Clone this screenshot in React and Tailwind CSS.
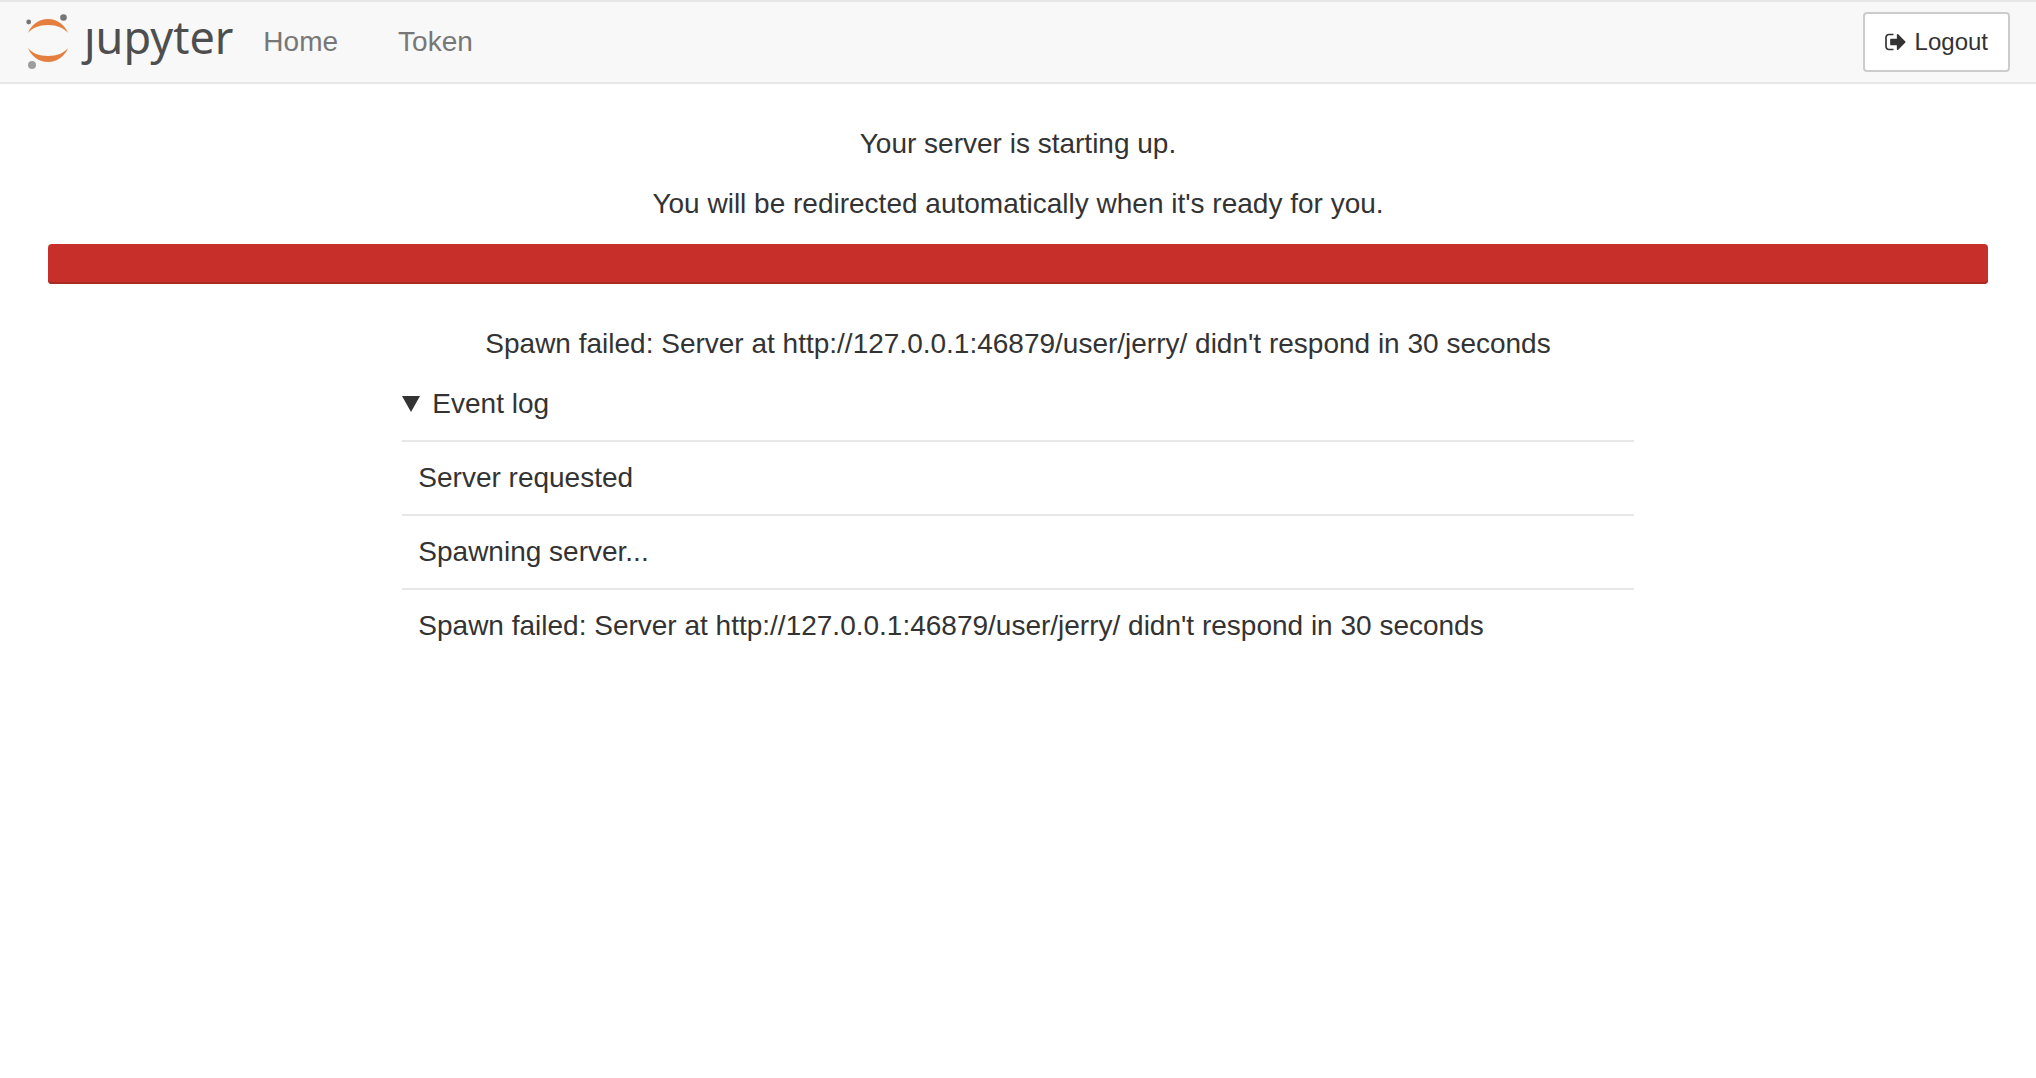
const events = [
  "Server requested",
  "Spawning server...",
  "Spawn failed: Server at http://127.0.0.1:46879/user/jerry/ didn't respond in 30 seconds",
];

function Logo() {
  return (
    <a href="#" aria-label="jupyter" className="flex h-20 items-center text-[#4e4e4e]">
      <svg viewBox="24 12 48 60" className="h-[60px] w-12" aria-hidden="true">
        <path d="M28 33C31 25 39 19 48 19S65 25 68 33C64 28 57 25 48 25S32 28 28 33Z" fill="#e57f3f" />
        <path d="M28 48C31 56 39 62 48 62S65 56 68 48C64 53 57 56 48 56S32 53 28 48Z" fill="#e57f3f" />
        <circle cx="28.700" cy="22" r="2.400" fill="#767677" />
        <circle cx="63.500" cy="17.500" r="3.300" fill="#767677" />
        <circle cx="32" cy="65" r="4" fill="#9e9e9e" />
      </svg>
      <span className="ml-3 pb-2.5 font-['Noto_Sans',sans-serif] text-[45px] leading-[68px]">ȷupyter</span>
    </a>
  );
}

export default function App() {
  return (
    <div className="min-h-screen bg-white font-['Liberation_Sans',Arial,sans-serif] text-[28px] leading-10 text-[#333]">
      <header className="flex items-center justify-between border-y-2 border-[#e7e7e7] bg-[#f8f8f8] pr-[26px] pl-6">
        <nav className="flex items-center text-[#777]">
          <Logo />
          <a href="#" className="ml-[30px]">Home</a>
          <a href="#" className="ml-[60px]">Token</a>
        </nav>
        <button type="button" className="flex h-[60px] items-center gap-2 rounded-sm border-2 border-[#ccc] bg-white px-5 text-2xl">
          <svg viewBox="0 0 1664 1536" className="h-5 w-[22px]" fill="currentColor" aria-hidden="true">
            <path d="M640 1440q0 4 1 20t.5 26.500-3 23.500-10 19.500-20.500 6.500H288q-119 0-203.500-84.500T0 1248V544q0-119 84.500-203.500T288 256h320q13 0 22.500 9.500T640 288q0 4 1 20t.5 26.500-3 23.500-10 19.500T608 384H288q-66 0-113 47t-47 113v704q0 66 47 113t113 47h312l11.500 1 11.500 3 8 5.500 7 9 2 13.500zm928-544q0 26-19 45l-544 544q-19 19-45 19t-45-19-19-45v-288H448q-26 0-45-19t-19-45V704q0-26 19-45t45-19h448V352q0-26 19-45t45-19 45 19l544 544q19 19 19 45z" transform="translate(0 -128)" />
          </svg>
          Logout
        </button>
      </header>
      <main className="px-12 pt-10">
        <div className="space-y-5 text-center">
          <p>Your server is starting up.</p>
          <p>You will be redirected automatically when it's ready for you.</p>
          <div
            role="progressbar"
            aria-label="Server startup"
            aria-valuenow={100}
            className="h-10 rounded-sm bg-[#c7302a] shadow-[inset_0_-2px_0_#a92924]"
          />
        </div>
        <p className="mt-10 text-center">
          Spawn failed: Server at http://127.0.0.1:46879/user/jerry/ didn't respond in 30 seconds
        </p>
        <div className="mx-auto mt-5 w-2/3 px-[31px]">
          <details open>
            <summary className="flex items-center gap-3 list-none">
              <svg viewBox="0 0 18 16" className="h-4 w-[18px]" fill="currentColor" aria-hidden="true">
                <path d="M0 0H18L9 16Z" />
              </svg>
              Event log
            </summary>
            <div className="mt-4">
              {events.map((event) => (
                <div key={event} className="border-t-2 border-[#e7e7e7] p-4">{event}</div>
              ))}
            </div>
          </details>
        </div>
      </main>
    </div>
  );
}
